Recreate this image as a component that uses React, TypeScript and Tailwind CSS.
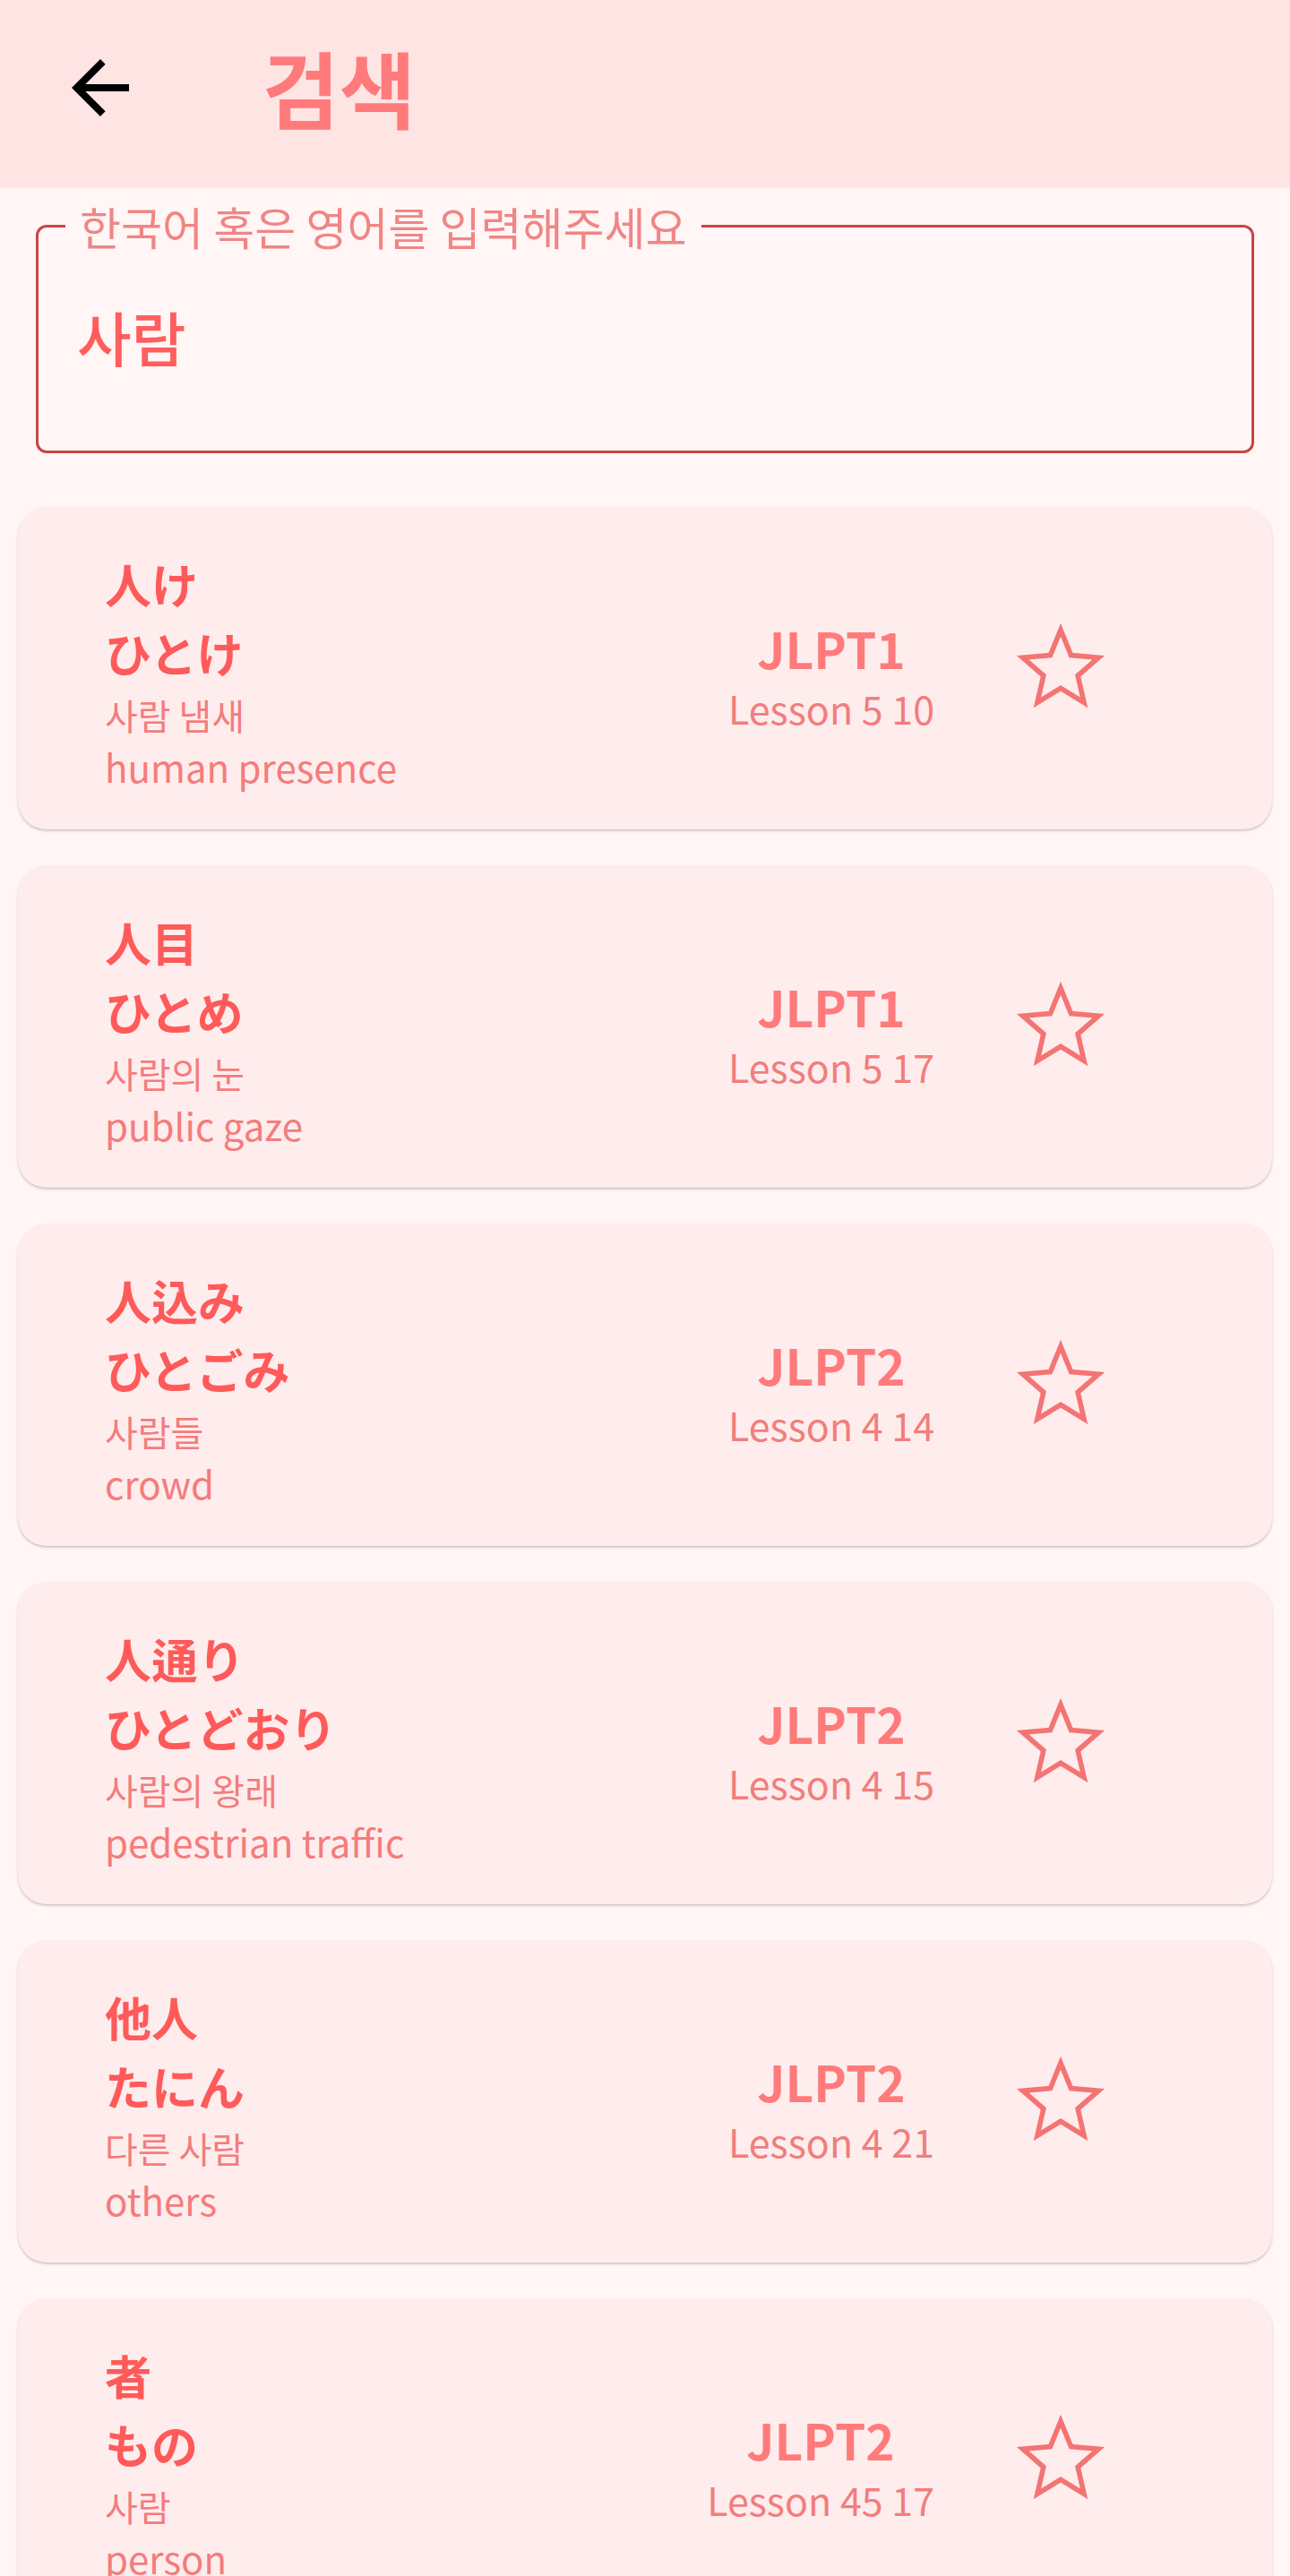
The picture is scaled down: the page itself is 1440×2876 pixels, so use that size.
import React from 'react';

type Word = {
  kanji: string;
  reading: string;
  meaning: string;
  english: string;
  level: string;
  lesson: string;
};

const WORDS: Word[] = [
  { kanji: '人け', reading: 'ひとけ', meaning: '사람 냄새', english: 'human presence', level: 'JLPT1', lesson: 'Lesson 5 10' },
  { kanji: '人目', reading: 'ひとめ', meaning: '사람의 눈', english: 'public gaze', level: 'JLPT1', lesson: 'Lesson 5 17' },
  { kanji: '人込み', reading: 'ひとごみ', meaning: '사람들', english: 'crowd', level: 'JLPT2', lesson: 'Lesson 4 14' },
  { kanji: '人通り', reading: 'ひとどおり', meaning: '사람의 왕래', english: 'pedestrian traffic', level: 'JLPT2', lesson: 'Lesson 4 15' },
  { kanji: '他人', reading: 'たにん', meaning: '다른 사람', english: 'others', level: 'JLPT2', lesson: 'Lesson 4 21' },
  { kanji: '者', reading: 'もの', meaning: '사람', english: 'person', level: 'JLPT2', lesson: 'Lesson 45 17' },
];

function BackArrow() {
  return (
    <svg width="96" height="96" viewBox="0 0 24 24" fill="#000">
      <path d="M20 11H7.83l5.59-5.59L12 4l-8 8 8 8 1.41-1.41L7.83 13H20v-2z" />
    </svg>
  );
}

function StarOutline() {
  return (
    <svg width="118" height="118" viewBox="0 0 24 24" fill="none" stroke="#f47474" strokeWidth="1.15" strokeLinejoin="miter" strokeMiterlimit="10">
      <polygon points="12,3.3 14.35,9.05 20.6,9.6 15.9,13.7 17.3,19.8 12,16.55 6.7,19.8 8.1,13.7 3.4,9.6 9.65,9.05" />
    </svg>
  );
}

function WordCard({ word }: { word: Word }) {
  return (
    <div className="flex h-[360px] shrink-0 items-center rounded-[32px] bg-[#ffeded] pl-[97px] pr-[177px] shadow-[0_2px_3px_rgba(0,0,0,0.16),0_1px_1px_rgba(0,0,0,0.06)]">
      <div className="flex flex-1 flex-col pt-[6px]">
        <div className="text-[52px] font-bold leading-[76px] text-[#ff5a5a]">{word.kanji}</div>
        <div className="text-[52px] font-bold leading-[78px] text-[#ff5a5a]">{word.reading}</div>
        <div className="text-[40px] leading-[60px] text-[#f47c7c]">{word.meaning}</div>
        <div className="text-[42px] leading-[56px] text-[#f47c7c]">{word.english}</div>
      </div>
      <div className="mt-[16px] flex flex-col items-center">
        <div className="text-[55px] font-bold leading-[66px] text-[#ff7b7b]">{word.level}</div>
        <div className="mt-[6px] text-[43px] leading-[56px] text-[#f27d7d]">{word.lesson}</div>
      </div>
      <div className="ml-[82px] flex h-[118px] w-[118px] items-center justify-center">
        <StarOutline />
      </div>
    </div>
  );
}

export default function App() {
  return (
    <div
      className="h-[2876px] w-[1440px] overflow-hidden bg-[#fff6f5]"
      style={{ fontFamily: '"Noto Sans CJK KR", "Noto Sans CJK JP", "Noto Sans", sans-serif' }}
    >
      {/* App bar */}
      <header className="flex h-[210px] items-center bg-[#ffe4e4] pb-[14px] pl-[64px]">
        <BackArrow />
        <h1 className="ml-[133px] pb-[4px] text-[93px] font-bold leading-none text-[#ff7b7b]">검색</h1>
      </header>

      {/* Search field */}
      <div className="px-[40px] pt-[17px]">
        <fieldset className="rounded-[12px] border-[3px] border-[#c84545] pl-[43px]">
          <legend className="ml-[-13px] px-[16px] text-[50px] leading-[50px] text-[#f08585]">
            한국어 혹은 영어를 입력해주세요
          </legend>
          <div className="pt-[60px] pb-[90px] text-[66px] font-medium leading-[76px] text-[#ff5e5e]">사람</div>
        </fieldset>
      </div>

      {/* Results */}
      <div className="flex flex-col gap-[40px] px-[20px] pt-[60px]">
        {WORDS.map((w) => (
          <WordCard key={w.kanji} word={w} />
        ))}
      </div>
    </div>
  );
}
